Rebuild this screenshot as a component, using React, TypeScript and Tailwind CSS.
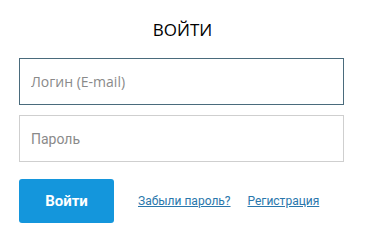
import React from 'react';

export default function App() {
  return (
    <div className="w-[365px] h-[239px] bg-white px-[19px] pt-[19px]">
      <h1 className="text-center text-[17px] leading-[22px] font-medium text-black font-['Open_Sans',sans-serif]">ВОЙТИ</h1>
      <form className="mt-[17px] flex flex-col gap-[10px]">
        <input
          type="text"
          placeholder="Логин (E-mail)"
          className="h-[47px] w-[325px] border border-[#4a6b7c] px-[11px] text-[14px] font-['Open_Sans',sans-serif] placeholder:text-[#8a8a8a] outline-none"
        />
        <input
          type="password"
          placeholder="Пароль"
          className="h-[47px] w-[325px] border border-[#cfcfcf] px-[11px] text-[14px] font-['Roboto',sans-serif] placeholder:text-[#8a8a8a] outline-none"
        />
      </form>
      <div className="mt-[17px] flex items-center">
        <button className="h-[44px] w-[95px] rounded-[3px] bg-[#1496dc] text-[15px] font-bold text-white font-['Roboto',sans-serif]">
          Войти
        </button>
        <a href="#" className="ml-[24px] text-[12px] text-[#2a77ac] underline font-['Roboto',sans-serif]">Забыли пароль?</a>
        <a href="#" className="ml-[17px] text-[12px] text-[#2a77ac] underline font-['Roboto',sans-serif]">Регистрация</a>
      </div>
    </div>
  );
}
